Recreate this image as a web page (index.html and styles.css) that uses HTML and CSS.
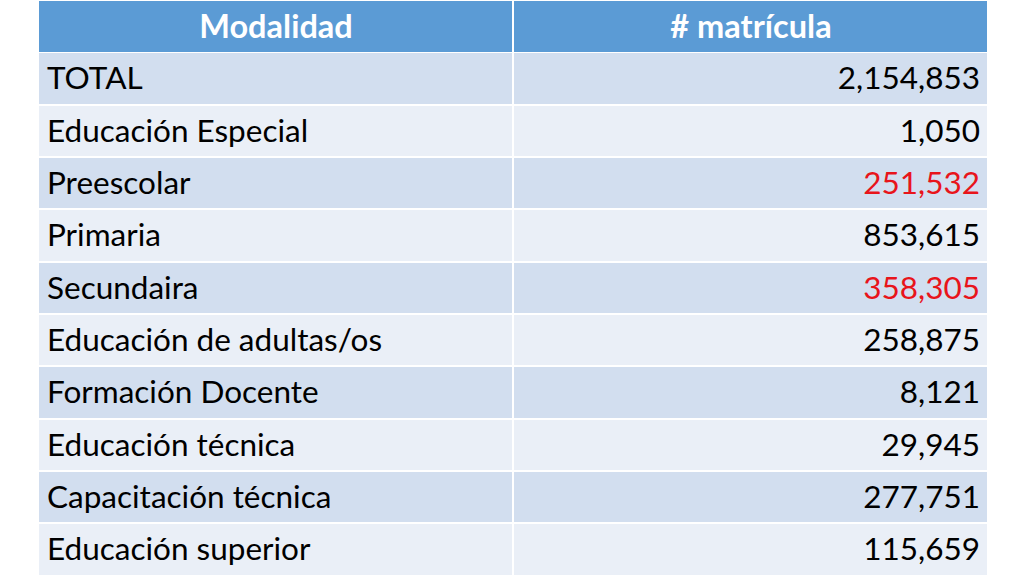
FILE: index.html
```html
<!DOCTYPE html>
<html lang="es">
<head>
<meta charset="utf-8">
<title>Matrícula por modalidad</title>
<link rel="stylesheet" href="styles.css">
</head>
<body>
<div class="table">
  <div class="cell head">Modalidad</div>
  <div class="cell head">#&nbsp;matrícula</div>

  <div class="cell odd">TOTAL</div>
  <div class="cell odd num">2,154,853</div>

  <div class="cell even">Educación Especial</div>
  <div class="cell even num">1,050</div>

  <div class="cell odd">Preescolar</div>
  <div class="cell odd num red">251,532</div>

  <div class="cell even">Primaria</div>
  <div class="cell even num">853,615</div>

  <div class="cell odd">Secundaira</div>
  <div class="cell odd num red">358,305</div>

  <div class="cell even">Educación de adultas/os</div>
  <div class="cell even num">258,875</div>

  <div class="cell odd">Formación Docente</div>
  <div class="cell odd num">8,121</div>

  <div class="cell even">Educación técnica</div>
  <div class="cell even num">29,945</div>

  <div class="cell odd">Capacitación técnica</div>
  <div class="cell odd num">277,751</div>

  <div class="cell even">Educación superior</div>
  <div class="cell even num">115,659</div>
</div>
</body>
</html>
```
FILE: styles.css
```css
html, body {
  margin: 0;
  padding: 0;
  background: #ffffff;
  overflow: hidden;
}

body {
  width: 1024px;
  height: 576px;
  font-family: Lato, "Open Sans", sans-serif;
}

.table {
  display: grid;
  grid-template-columns: 473px 473px;
  grid-auto-rows: 50.33px;
  column-gap: 2px;
  row-gap: 2px;
  margin: 1px 0 0 39px;
}

.cell {
  display: flex;
  align-items: center;
  padding: 0 7px 2px 8px;
  font-size: 31.5px;
  color: #000000;
  white-space: nowrap;
}

.head {
  height: 49px;
  margin-bottom: 1px;
  justify-content: center;
  background: #5b9bd5;
  color: #ffffff;
  font-weight: 700;
  font-size: 32.5px;
}

.odd {
  background: #d2deef;
}

.even {
  background: #eaeff7;
}

.num {
  justify-content: flex-end;
}

.red {
  color: #e8141b;
}
```
